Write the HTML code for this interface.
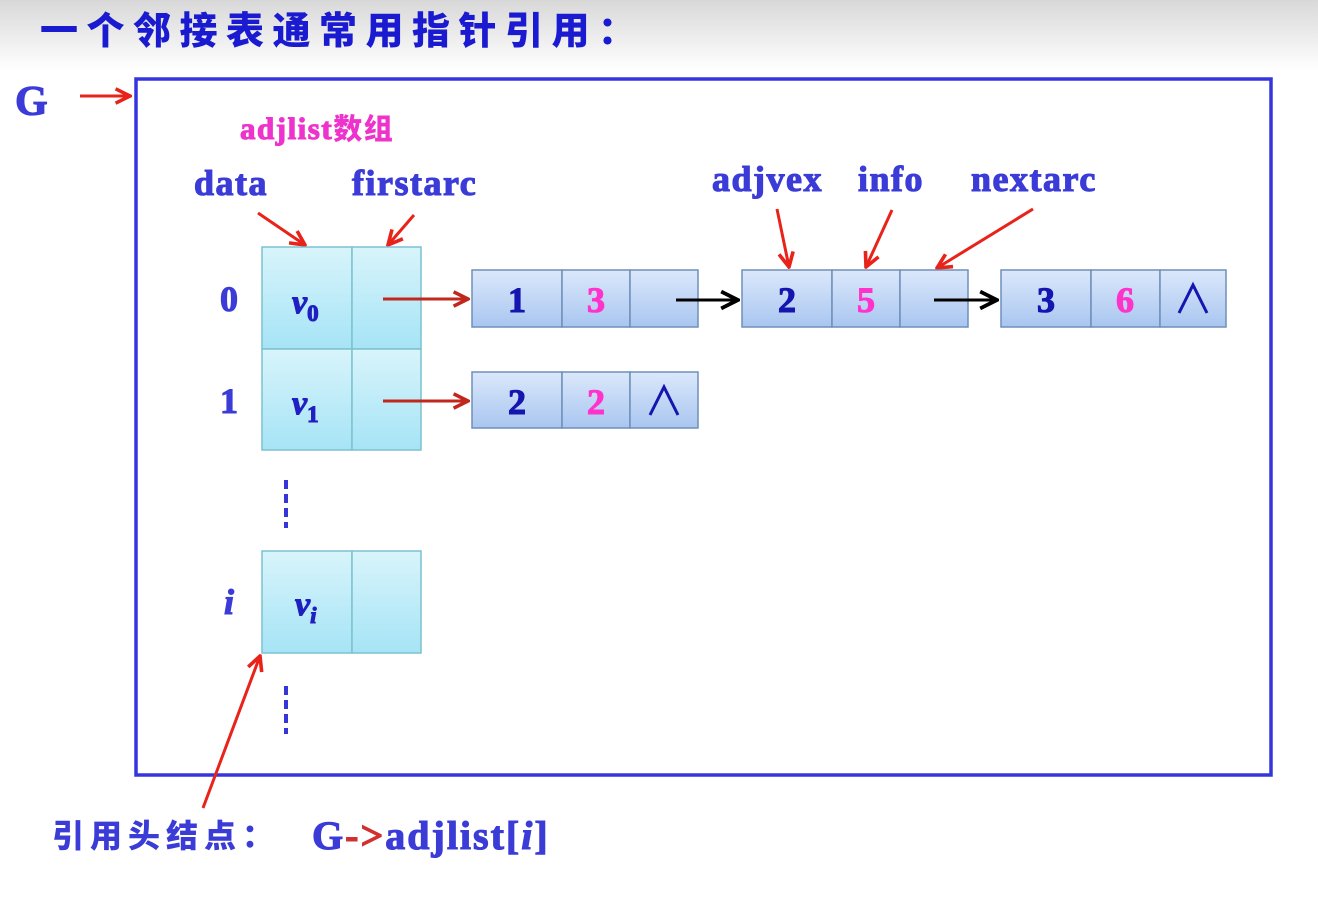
<!DOCTYPE html>
<html><head><meta charset="utf-8"><style>
html,body{margin:0;padding:0;width:1318px;height:911px;overflow:hidden;background:#fff}
svg{display:block}
.s{font-family:"Liberation Serif","DejaVu Serif",serif;font-weight:700;stroke-width:1.1px;paint-order:stroke}
.c{font-family:"Noto Sans CJK SC","WenQuanYi Zen Hei",sans-serif;font-weight:900}
</style></head><body>
<svg width="1318" height="911" viewBox="0 0 1318 911" xmlns="http://www.w3.org/2000/svg">
<defs>
<linearGradient id="bg" x1="0" y1="0" x2="0" y2="1">
<stop offset="0" stop-color="#d8d8d8"/><stop offset="1" stop-color="#ffffff"/></linearGradient>
<linearGradient id="hc" x1="0" y1="0" x2="0" y2="1">
<stop offset="0" stop-color="#d8f4fb"/><stop offset="1" stop-color="#a6e4f6"/></linearGradient>
<linearGradient id="nc" x1="0" y1="0" x2="0" y2="1">
<stop offset="0" stop-color="#dbe8fb"/><stop offset="1" stop-color="#a9c6f0"/></linearGradient>
<marker id="ar" viewBox="0 0 10 10" refX="9" refY="5" markerWidth="6" markerHeight="6" orient="auto"><path d="M1 1 L9 5 L1 9" fill="none" stroke="#e8231a" stroke-width="2"/></marker>
<marker id="ad" viewBox="0 0 10 10" refX="9" refY="5" markerWidth="6" markerHeight="6" orient="auto"><path d="M1 1 L9 5 L1 9" fill="none" stroke="#c0281e" stroke-width="2"/></marker>
<marker id="ab" viewBox="0 0 10 10" refX="9" refY="5" markerWidth="7" markerHeight="7" orient="auto"><path d="M1 1 L9 5 L1 9" fill="none" stroke="#000" stroke-width="1.8"/></marker>
</defs>
<rect x="0" y="0" width="1318" height="70" fill="url(#bg)"/>
<text x="40" y="44" class="c" font-size="38" fill="#1a1ad0" letter-spacing="8.5">一个邻接表通常用指针引用：</text>
<text x="15" y="115" class="s" font-size="42" fill="#3b3bd8" stroke="#3b3bd8">G</text>
<line x1="80" y1="96" x2="130" y2="96" stroke="#e8231a" stroke-width="3" marker-end="url(#ar)"/>
<rect x="136" y="79" width="1135" height="696" fill="none" stroke="#3535e0" stroke-width="3.5"/>
<text x="240" y="139" class="s" font-size="31" fill="#ee33cc" stroke="#ee33cc" letter-spacing="1.5">adjlist<tspan class="c" font-size="29" stroke="none">数组</tspan></text>
<g class="s" font-size="36" fill="#3b3bd8" stroke="#3b3bd8" letter-spacing="1.5">
<text x="194" y="195">data</text>
<text x="352" y="195">firstarc</text>
<text x="712" y="191">adjvex</text>
<text x="858" y="191">info</text>
<text x="971" y="191">nextarc</text>
</g>
<g stroke="#e8231a" stroke-width="3" fill="none">
<line x1="258" y1="213" x2="305" y2="245" marker-end="url(#ar)"/>
<line x1="414" y1="215" x2="388" y2="245" marker-end="url(#ar)"/>
<line x1="777" y1="209" x2="789" y2="267" marker-end="url(#ar)"/>
<line x1="892" y1="210" x2="866" y2="267" marker-end="url(#ar)"/>
<line x1="1033" y1="209" x2="937" y2="268" marker-end="url(#ar)"/>
<line x1="203" y1="808" x2="260" y2="656" marker-end="url(#ar)"/>
</g>
<g stroke="#7cc2cf" stroke-width="1.5" fill="url(#hc)">
<rect x="262" y="247" width="90" height="102"/><rect x="352" y="247" width="69" height="102"/>
<rect x="262" y="349" width="90" height="101"/><rect x="352" y="349" width="69" height="101"/>
<rect x="262" y="551" width="90" height="102"/><rect x="352" y="551" width="69" height="102"/>
</g>
<g class="s" font-size="36" fill="#3b3bd8" stroke="#3b3bd8">
<text x="220" y="311">0</text>
<text x="220" y="413">1</text>
<text x="224" y="614" font-style="italic">i</text>
</g>
<g class="s" fill="#2020c0" stroke="#2020c0" font-style="italic" font-size="34">
<text x="292" y="313">v<tspan font-size="23" dy="8" font-style="normal">0</tspan></text>
<text x="292" y="414">v<tspan font-size="23" dy="8" font-style="normal">1</tspan></text>
<text x="295" y="615">v<tspan font-size="23" dy="8">i</tspan></text>
</g>
<g stroke="#3535d8" stroke-width="4" stroke-dasharray="9,5"><line x1="286" y1="480" x2="286" y2="528"/><line x1="286" y1="686" x2="286" y2="734"/></g>
<g stroke="#6f8fb8" stroke-width="1.5" fill="url(#nc)">
<rect x="472" y="270" width="90" height="57"/><rect x="562" y="270" width="68" height="57"/><rect x="630" y="270" width="68" height="57"/>
<rect x="742" y="270" width="90" height="57"/><rect x="832" y="270" width="68" height="57"/><rect x="900" y="270" width="68" height="57"/>
<rect x="1001" y="270" width="90" height="57"/><rect x="1091" y="270" width="69" height="57"/><rect x="1160" y="270" width="66" height="57"/>
<rect x="472" y="372" width="90" height="56"/><rect x="562" y="372" width="68" height="56"/><rect x="630" y="372" width="68" height="56"/>
</g>
<g class="s" font-size="36" text-anchor="middle">
<text x="517" y="312" fill="#1515b0" stroke="#1515b0">1</text><text x="596" y="312" fill="#ff33cc" stroke="#ff33cc">3</text>
<text x="787" y="312" fill="#1515b0" stroke="#1515b0">2</text><text x="866" y="312" fill="#ff33cc" stroke="#ff33cc">5</text>
<text x="1046" y="312" fill="#1515b0" stroke="#1515b0">3</text><text x="1125" y="312" fill="#ff33cc" stroke="#ff33cc">6</text>
<text x="517" y="414" fill="#1515b0" stroke="#1515b0">2</text><text x="596" y="414" fill="#ff33cc" stroke="#ff33cc">2</text>
</g>
<g stroke="#1515b0" stroke-width="3" fill="none">
<path d="M1179 313 L1193 285 L1207 313"/>
<path d="M650 415 L664 387 L678 415"/>
</g>
<g stroke="#c0281e" stroke-width="3">
<line x1="383" y1="299" x2="468" y2="299" marker-end="url(#ad)"/>
<line x1="383" y1="401" x2="468" y2="401" marker-end="url(#ad)"/>
</g>
<g stroke="#000" stroke-width="3">
<line x1="676" y1="300" x2="738" y2="300" marker-end="url(#ab)"/>
<line x1="934" y1="300" x2="997" y2="300" marker-end="url(#ab)"/>
</g>
<text x="52" y="847" class="c" font-size="32" fill="#3b3bd8" letter-spacing="6">引用头结点：</text>
<text x="312" y="849" class="s" font-size="40" fill="#3b3bd8" stroke="#3b3bd8" letter-spacing="2">G<tspan fill="#d03030" stroke="#d03030">-&gt;</tspan>adjlist[<tspan font-style="italic">i</tspan>]</text>
</svg>
</body></html>
